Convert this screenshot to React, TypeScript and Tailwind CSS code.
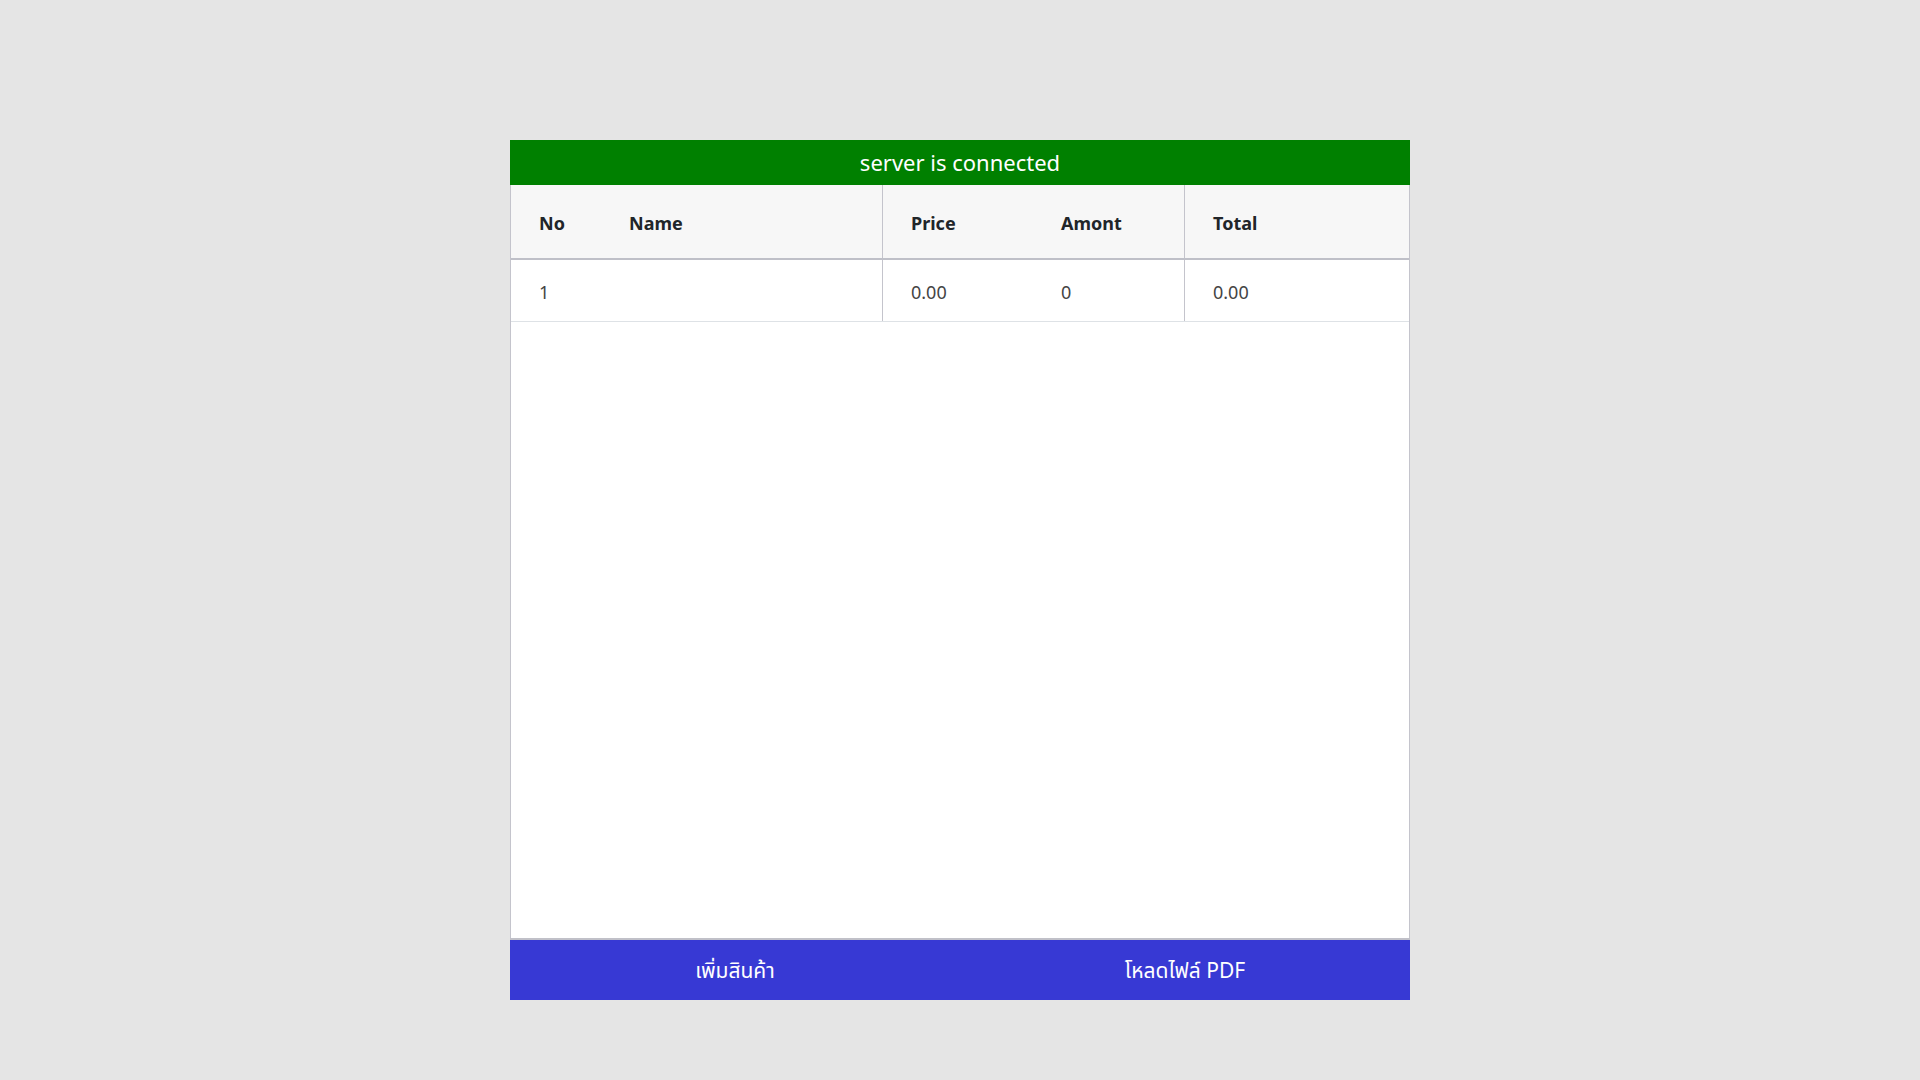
const rows = [{ no: 1, name: "", price: "0.00", amount: "0", total: "0.00" }];

export default function App() {
  return (
    <div
      className="min-h-screen bg-[#e5e5e5] pt-[140px] pb-[80px]"
      style={{ fontFamily: '"Segoe UI", "Noto Sans", "Noto Sans Thai", sans-serif' }}
    >
      <div className="mx-auto flex h-[860px] w-[900px] flex-col">
        {/* status bar */}
        <div className="flex h-[45px] items-center justify-center bg-[#008000] text-[22px] text-white">
          server is connected
        </div>

        {/* table */}
        <div className="flex flex-1 flex-col border-x border-[#c4c4cc] bg-white">
          <div className="flex h-[75px] border-b-2 border-[#bfc0c8] bg-[#f7f7f7] text-[18px] font-bold text-[#212529]">
            <div className="flex w-[372px] items-center border-r border-[#c4c4cc] pl-[28px] pt-[3px]">
              <span className="w-[90px]">No</span>
              <span>Name</span>
            </div>
            <div className="flex w-[302px] items-center border-r border-[#c4c4cc] pl-[28px] pt-[3px]">
              <span className="w-[150px]">Price</span>
              <span>Amont</span>
            </div>
            <div className="flex flex-1 items-center pl-[28px] pt-[3px]">Total</div>
          </div>

          {rows.map((r) => (
            <div
              key={r.no}
              className="flex h-[62px] border-b border-[#dee2e6] text-[18px] text-[#444]"
            >
              <div className="flex w-[372px] items-center border-r border-[#c4c4cc] pl-[28px] pt-[3px]">
                <span className="w-[90px]">{r.no}</span>
                <span>{r.name}</span>
              </div>
              <div className="flex w-[302px] items-center border-r border-[#c4c4cc] pl-[28px] pt-[3px]">
                <span className="w-[150px]">{r.price}</span>
                <span>{r.amount}</span>
              </div>
              <div className="flex flex-1 items-center pl-[28px] pt-[3px]">{r.total}</div>
            </div>
          ))}
        </div>

        {/* actions */}
        <div className="flex h-[62px] border-t-2 border-[#c0c0c8] bg-[#3739d4] pt-[2px] text-[21px] text-white">
          <button className="flex-1">เพิ่มสินค้า</button>
          <button className="flex-1">โหลดไฟล์ PDF</button>
        </div>
      </div>
    </div>
  );
}
